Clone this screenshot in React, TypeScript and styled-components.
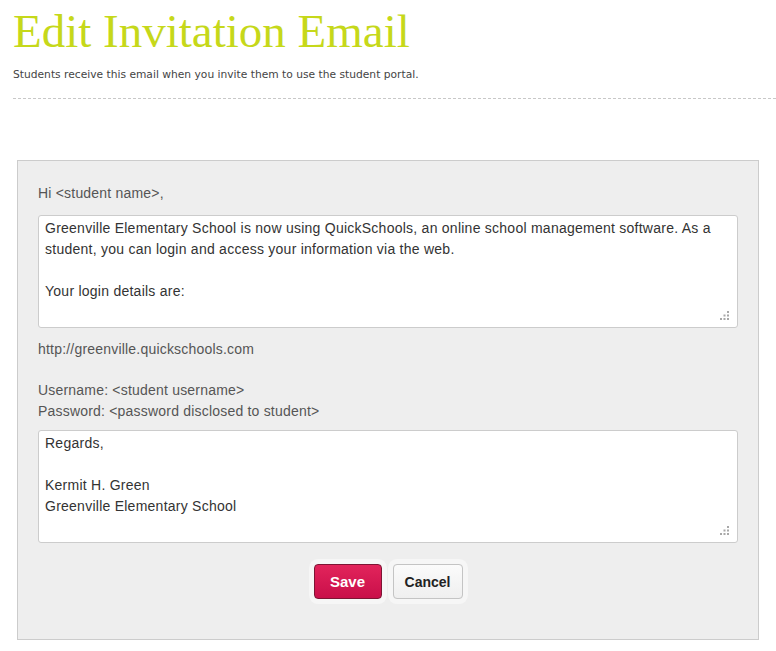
import React from "react";
import styled, { createGlobalStyle } from "styled-components";

const Global = createGlobalStyle`
  html, body { margin: 0; padding: 0; background: #ffffff; }
  body { font-family: "Liberation Sans", Arial, sans-serif; }
`;

const Page = styled.div`
  width: 776px;
  min-height: 651px;
  box-sizing: border-box;
  padding: 0 0 0 13px;
`;

const Title = styled.h1`
  margin: 0;
  padding-top: 6px;
  font-family: "Liberation Serif", "Times New Roman", serif;
  font-weight: 400;
  font-size: 47px;
  line-height: 50px;
  color: #c6d81a;
`;

const Subtitle = styled.p`
  margin: 11px 0 0 0;
  font-family: "DejaVu Sans", Verdana, sans-serif;
  font-size: 10.7px;
  line-height: 16px;
  color: #444;
`;

const Divider = styled.hr`
  margin: 15px 0 0 0;
  border: none;
  border-top: 1px dashed #c8c8c8;
  height: 0;
`;

const Panel = styled.div`
  margin: 61px 0 0 4px;
  width: 742px;
  box-sizing: border-box;
  background: #eeeeee;
  border: 1px solid #cccccc;
  padding: 22px 20px 40px 20px;
  display: flex;
  flex-direction: column;
  color: #555;
  font-size: 14px;
  line-height: 21px;
  letter-spacing: 0.2px;
`;

const Line = styled.div<{ $gapTop?: number }>`
  margin-top: ${(p) => p.$gapTop ?? 0}px;
  min-height: 21px;
`;

const FieldWrap = styled.div<{ $gapTop: number }>`
  position: relative;
  margin-top: ${(p) => p.$gapTop}px;
  width: 700px;
  height: 113px;
`;

const Field = styled.textarea`
  display: block;
  width: 100%;
  height: 100%;
  box-sizing: border-box;
  background: #ffffff;
  border: 1px solid #cccccc;
  border-radius: 3px;
  padding: 2px 20px 2px 6px;
  font-family: "Liberation Sans", Arial, sans-serif;
  font-size: 14px;
  line-height: 21px;
  letter-spacing: 0.25px;
  color: #333;
  outline: none;
  resize: none;
`;

const Grip = styled.svg`
  position: absolute;
  right: 8px;
  bottom: 7px;
  width: 10px;
  height: 10px;
  pointer-events: none;
`;

const Actions = styled.div`
  margin-top: 21px;
  display: flex;
  justify-content: center;
  gap: 11px;
`;

const Button = styled.button<{ $primary?: boolean }>`
  height: 35px;
  min-width: ${(p) => (p.$primary ? 68 : 70)}px;
  box-sizing: border-box;
  border-radius: 4px;
  font-family: "Liberation Sans", Arial, sans-serif;
  font-weight: 700;
  font-size: ${(p) => (p.$primary ? 15 : 14)}px;
  padding: 0 11px;
  cursor: pointer;
  box-shadow: 0 0 0 5px #f6f6f6;
  border: 1px solid ${(p) => (p.$primary ? "#7d1534" : "#c4c4c4")};
  color: ${(p) => (p.$primary ? "#ffffff" : "#222")};
  background: ${(p) =>
    p.$primary
      ? "linear-gradient(#e2245b, #c90f4a)"
      : "linear-gradient(#fbfbfb, #efefef)"};
`;

function ResizeGrip() {
  const dots: [number, number][] = [
    [7, 0],
    [3.5, 3.5],
    [7, 3.5],
    [0, 7],
    [3.5, 7],
    [7, 7],
  ];
  return (
    <Grip viewBox="0 0 10 10">
      {dots.map(([x, y], i) => (
        <rect key={i} x={x} y={y} width={2} height={2} fill="#a8a8a8" />
      ))}
    </Grip>
  );
}

function EmailField({ gapTop, text }: { gapTop: number; text: string }) {
  return (
    <FieldWrap $gapTop={gapTop}>
      <Field defaultValue={text} />
      <ResizeGrip />
    </FieldWrap>
  );
}

export default function App() {
  return (
    <>
      <Global />
      <Page>
        <Title>Edit Invitation Email</Title>
        <Subtitle>Students receive this email when you invite them to use the student portal.</Subtitle>
        <Divider />
        <Panel>
          <Line>Hi &lt;student name&gt;,</Line>
          <EmailField
            gapTop={11}
            text={
              "Greenville Elementary School is now using QuickSchools, an online school management software. As a student, you can login and access your information via the web.\n\nYour login details are:"
            }
          />
          <Line $gapTop={11}>http://greenville.quickschools.com</Line>
          <Line $gapTop={20}>Username: &lt;student username&gt;</Line>
          <Line>Password: &lt;password disclosed to student&gt;</Line>
          <EmailField
            gapTop={8}
            text={"Regards,\n\nKermit H. Green\nGreenville Elementary School"}
          />
          <Actions>
            <Button $primary>Save</Button>
            <Button>Cancel</Button>
          </Actions>
        </Panel>
      </Page>
    </>
  );
}
